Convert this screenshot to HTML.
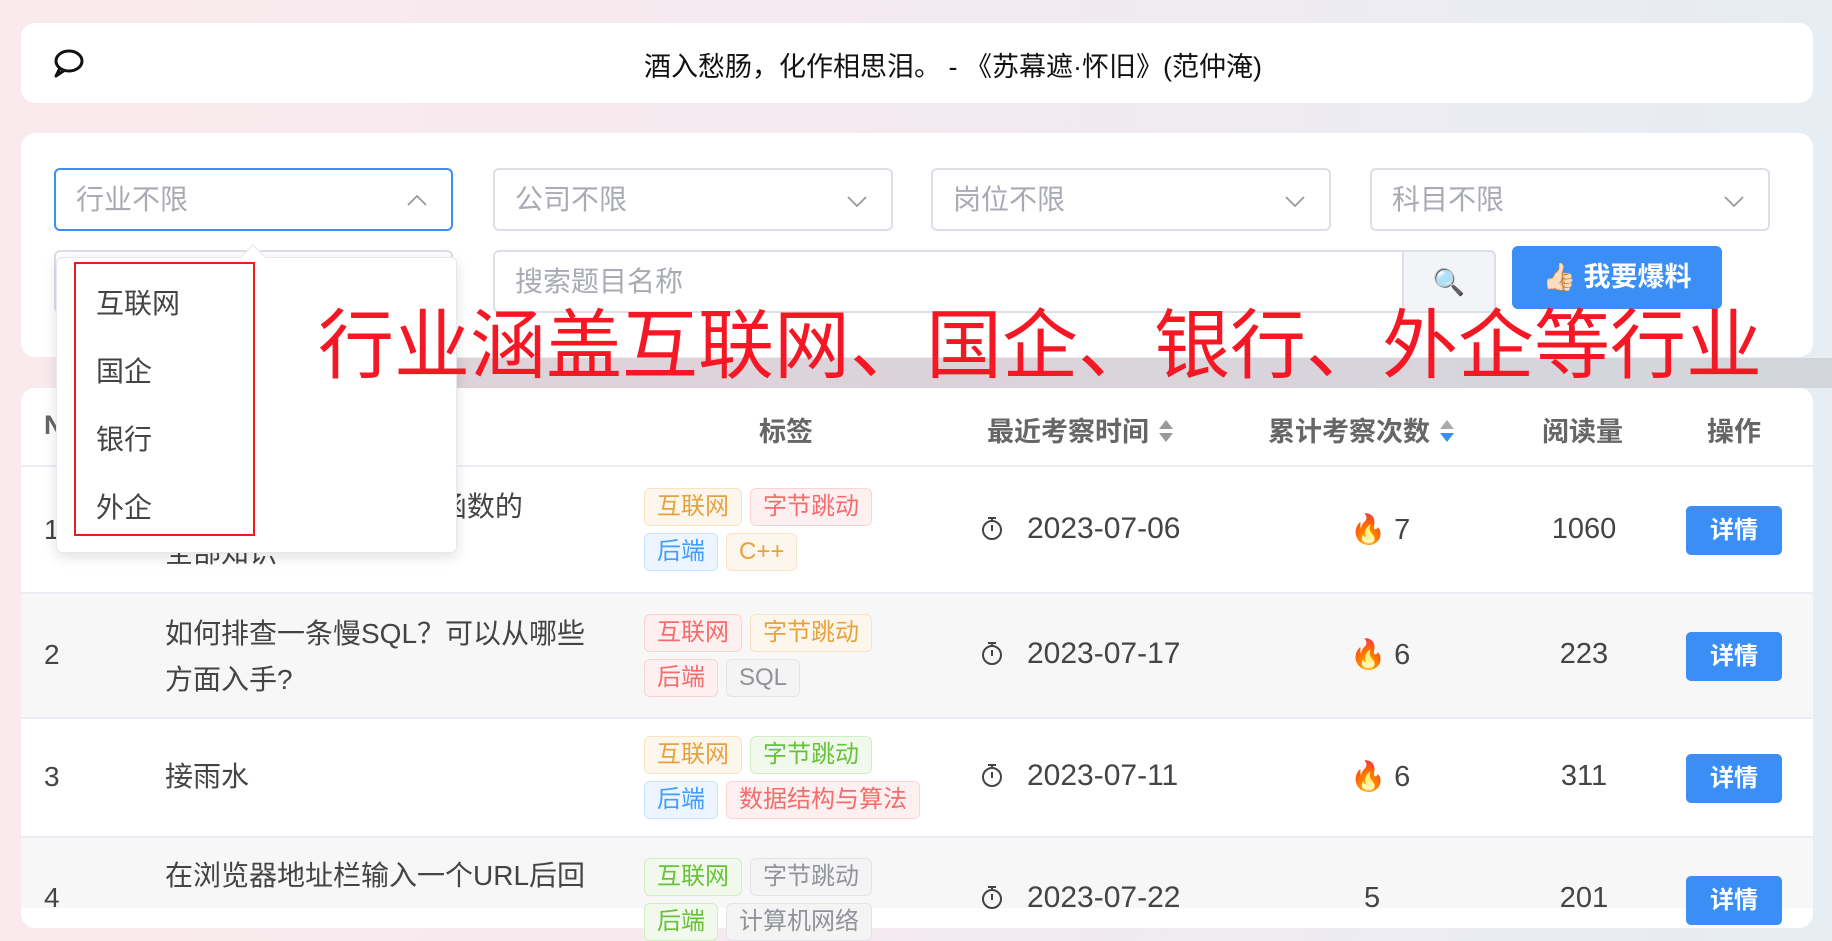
<!DOCTYPE html>
<html><head><meta charset="utf-8">
<style>
*{box-sizing:border-box;margin:0;padding:0}
body{width:1832px;height:908px;overflow:hidden;position:relative;font-family:"Liberation Sans","Noto Sans CJK SC",sans-serif;background:linear-gradient(90deg,#fbeaed 0%,#f3eaf0 50%,#e6edf3 100%);color:#333}
.card{position:absolute;background:#fff;border-radius:14px}
.sel{position:absolute;height:63px;border:2px solid #dcdfe6;border-radius:6px;background:#fff;font-size:28px;color:#a8abb2;padding-left:20px;line-height:59px}
.sel svg{position:absolute;right:22px;top:21px}
.abs{position:absolute}
.tags{position:absolute;left:644px;width:295px;display:flex;flex-wrap:wrap;gap:7px 8px}
.tag{height:38px;line-height:36px;padding:0 12px;border:1px solid;border-radius:6px;font-size:24px}
.o{background:#fdf6ec;color:#e6a23c;border-color:#f8e3c5}
.r{background:#fef0f0;color:#f56c6c;border-color:#fcd3d3}
.b{background:#ecf5ff;color:#409eff;border-color:#c6e2ff}
.g{background:#f4f4f5;color:#909399;border-color:#e3e4e7}
.gr{background:#f0f9eb;color:#67c23a;border-color:#d1edc4}
.row{position:absolute;left:21px;width:1792px;border-bottom:2px solid #ebeef5}
.num{position:absolute;left:44px;font-size:28px;color:#444}
.title{position:absolute;left:165px;width:460px;font-size:28px;line-height:46px;color:#444}
.date{position:absolute;left:1027px;font-size:30px;color:#444}
.clk{position:absolute;left:980px}
.cnt{position:absolute;left:1350px;font-size:29px;color:#444}
.reads{position:absolute;left:1484px;width:200px;text-align:center;font-size:29px;color:#444}
.btn{position:absolute;left:1686px;width:96px;height:49px;background:#3a8ef6;color:#fff;border-radius:5px;font-size:24px;font-weight:bold;text-align:center;line-height:49px}
.th{position:absolute;top:410px;font-size:27px;font-weight:bold;color:#666}
</style></head><body>

<div class="card" style="left:21px;top:23px;width:1792px;height:80px">
  <svg class="abs" style="left:30px;top:25px" width="34" height="32" viewBox="0 0 34 32"><ellipse cx="18" cy="13" rx="13" ry="10" fill="none" stroke="#111" stroke-width="3"/><path d="M9 20 L5 28 L14 22" fill="none" stroke="#111" stroke-width="3" stroke-linejoin="round"/></svg>
  <div class="abs" style="left:36px;width:1792px;top:22px;text-align:center;font-size:27px;color:#111">酒入愁肠，化作相思泪。 - 《苏幕遮·怀旧》(范仲淹)</div>
</div>

<div class="card" style="left:21px;top:133px;width:1792px;height:224px"></div>
<div class="sel" style="left:54px;top:168px;width:399px;border-color:#3a8ef6">行业不限<svg width="24" height="20" viewBox="0 0 24 20"><path d="M3 14 L12 5 L21 14" fill="none" stroke="#999" stroke-width="1.8"/></svg></div>
<div class="sel" style="left:493px;top:168px;width:400px">公司不限<svg width="24" height="20" viewBox="0 0 24 20"><path d="M3 6 L12 15 L21 6" fill="none" stroke="#999" stroke-width="1.8"/></svg></div>
<div class="sel" style="left:931px;top:168px;width:400px">岗位不限<svg width="24" height="20" viewBox="0 0 24 20"><path d="M3 6 L12 15 L21 6" fill="none" stroke="#999" stroke-width="1.8"/></svg></div>
<div class="sel" style="left:1370px;top:168px;width:400px">科目不限<svg width="24" height="20" viewBox="0 0 24 20"><path d="M3 6 L12 15 L21 6" fill="none" stroke="#999" stroke-width="1.8"/></svg></div>
<div class="sel" style="left:54px;top:250px;width:399px;height:63px"></div>
<div class="sel" style="left:493px;top:250px;width:1003px;height:63px;border-radius:6px">搜索题目名称</div>
<div class="abs" style="left:1402px;top:250px;width:94px;height:63px;background:#f2f4f7;border:2px solid #dcdfe6;border-radius:0 6px 6px 0;text-align:center;line-height:60px;font-size:26px">🔍</div>
<div class="abs" style="left:1512px;top:246px;width:210px;height:63px;background:#3a8ef6;border-radius:6px;color:#fff;font-weight:bold;font-size:27px;text-align:center;line-height:63px">👍🏻 我要爆料</div>

<div class="abs" style="left:260px;top:358px;width:1572px;height:30px;background:rgba(170,160,170,0.3)"></div>

<div class="card" style="left:21px;top:388px;width:1792px;height:540px"></div>
<div class="th" style="left:44px">No</div>
<div class="th" style="left:759px">标签</div>
<div class="th" style="left:987px">最近考察时间 <svg width="18" height="26" viewBox="0 0 18 26" style="vertical-align:-3px"><path d="M9 2 L16 11 H2Z" fill="#999"/><path d="M9 24 L16 15 H2Z" fill="#999"/></svg></div>
<div class="th" style="left:1268px">累计考察次数 <svg width="18" height="26" viewBox="0 0 18 26" style="vertical-align:-3px"><path d="M9 2 L16 11 H2Z" fill="#aaa"/><path d="M9 24 L16 15 H2Z" fill="#3a8ef6"/></svg></div>
<div class="th" style="left:1542px">阅读量</div>
<div class="th" style="left:1707px">操作</div>
<div class="row" style="top:465px;height:2px;border:none;background:#ebeef5"></div>

<svg width="0" height="0" style="position:absolute"><defs><g id="clk"><circle cx="12" cy="15" r="9" fill="none" stroke="#444" stroke-width="2"/><path d="M12 10 V16 M8 3 H16 M12 3 V6" stroke="#444" stroke-width="2" fill="none"/></g></defs></svg>

<div class="row" style="top:467px;height:127px;background:#fff"></div>
<div class="num" style="top:514px">1</div>
<div class="title" style="top:484px">一文搞懂C++ Lambda函数的<br>全部知识</div>
<div class="tags" style="top:488px"><span class="tag o">互联网</span><span class="tag r">字节跳动</span><span class="tag b">后端</span><span class="tag o">C++</span></div>
<svg class="clk" style="top:515px" width="24" height="26"><use href="#clk"/></svg>
<div class="date" style="top:512px">2023-07-06</div>
<div class="cnt" style="top:513px">🔥 7</div>
<div class="reads" style="top:513px">1060</div>
<div class="btn" style="top:506px">详情</div>

<div class="row" style="top:594px;height:125px;background:#f7f7f7"></div>
<div class="num" style="top:639px">2</div>
<div class="title" style="top:611px">如何排查一条慢SQL？可以从哪些<br>方面入手?</div>
<div class="tags" style="top:614px"><span class="tag r">互联网</span><span class="tag o">字节跳动</span><span class="tag r">后端</span><span class="tag g">SQL</span></div>
<svg class="clk" style="top:640px" width="24" height="26"><use href="#clk"/></svg>
<div class="date" style="top:637px">2023-07-17</div>
<div class="cnt" style="top:638px">🔥 6</div>
<div class="reads" style="top:638px">223</div>
<div class="btn" style="top:632px">详情</div>

<div class="row" style="top:719px;height:119px;background:#fff"></div>
<div class="num" style="top:761px">3</div>
<div class="title" style="top:754px">接雨水</div>
<div class="tags" style="top:736px"><span class="tag o">互联网</span><span class="tag gr">字节跳动</span><span class="tag b">后端</span><span class="tag r">数据结构与算法</span></div>
<svg class="clk" style="top:762px" width="24" height="26"><use href="#clk"/></svg>
<div class="date" style="top:759px">2023-07-11</div>
<div class="cnt" style="top:760px">🔥 6</div>
<div class="reads" style="top:760px">311</div>
<div class="btn" style="top:754px">详情</div>

<div class="row" style="top:838px;height:70px;background:#f7f7f7;border:none"></div>
<div class="num" style="top:882px">4</div>
<div class="title" style="top:853px">在浏览器地址栏输入一个URL后回</div>
<div class="tags" style="top:858px"><span class="tag gr">互联网</span><span class="tag g">字节跳动</span><span class="tag gr">后端</span><span class="tag g">计算机网络</span></div>
<svg class="clk" style="top:884px" width="24" height="26"><use href="#clk"/></svg>
<div class="date" style="top:881px">2023-07-22</div>
<div class="cnt" style="top:882px;left:1364px">5</div>
<div class="reads" style="top:882px">201</div>
<div class="btn" style="top:876px">详情</div>

<!-- dropdown -->
<div class="abs" style="left:56px;top:257px;width:401px;height:296px;background:#fff;border:1px solid #e4e7ed;border-radius:6px;box-shadow:0 4px 14px rgba(0,0,0,0.12)"></div>
<div class="abs" style="left:244px;top:248px;width:18px;height:18px;background:#fff;transform:rotate(45deg);border-left:1px solid #e4e7ed;border-top:1px solid #e4e7ed"></div>
<div class="abs" style="left:74px;top:262px;width:181px;height:274px;border:2px solid #f01a1a"></div>
<div class="abs" style="left:96px;top:270px;font-size:28px;color:#444;line-height:68px">互联网<br>国企<br>银行<br>外企</div>

<div class="abs" style="left:318px;top:294px;font-size:76px;color:#f51824;white-space:nowrap;font-family:'Noto Sans CJK SC',sans-serif;line-height:90px">行业涵盖互联网、国企、银行、外企等行业</div>
</body></html>
